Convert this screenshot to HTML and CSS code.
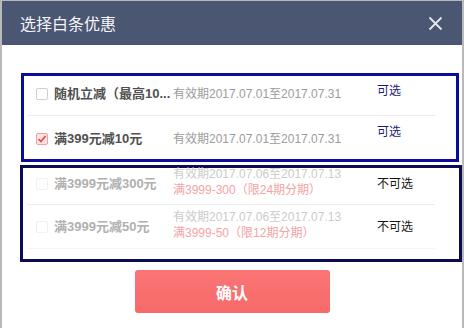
FILE: index.html
```html
<!DOCTYPE html>
<html lang="zh-CN">
<head>
    <meta charset="UTF-8">
    <meta name="viewport" content="width=device-width, initial-scale=1">
    <title>选择白条优惠</title>
    <link rel="stylesheet" href="styles.css">
</head>
<body>

    <div class="dialog">
        <!-- Header -->
        <div class="dialog-head">
            <h2>选择白条优惠</h2>
            <svg class="close" width="15" height="15" viewBox="0 0 15 15">
                <path d="M1.5 1.5 L13.5 13.5 M13.5 1.5 L1.5 13.5" stroke="#e4e7ee" stroke-width="1.8" fill="none"/>
            </svg>
        </div>

        <!-- Available coupons -->
        <div class="group group-ok">
            <div class="coupon row-a">
                <span class="check"></span>
                <span class="name">随机立减（最高10...</span>
                <span class="info">有效期2017.07.01至2017.07.31</span>
                <span class="status up-a">可选</span>
            </div>
            <div class="coupon row-b">
                <span class="check checked">
                    <svg width="10" height="10" viewBox="0 0 10 10"><path d="M1.5 5 L4 7.5 L8.5 2" stroke="#e0474c" stroke-width="1.6" fill="none"/></svg>
                </span>
                <span class="name">满399元减10元</span>
                <span class="info">有效期2017.07.01至2017.07.31</span>
                <span class="status up-b">可选</span>
            </div>
        </div>

        <!-- Unavailable coupons -->
        <div class="group group-off">
            <div class="coupon off row-c">
                <span class="check"></span>
                <span class="name">满3999元减300元</span>
                <span class="info">
                    <span class="line">有效期2017.07.06至2017.07.13</span>
                    <span class="line red">满3999-300（限24期分期）</span>
                </span>
                <span class="status">不可选</span>
            </div>
            <div class="coupon off row-d">
                <span class="check"></span>
                <span class="name">满3999元减50元</span>
                <span class="info">
                    <span class="line">有效期2017.07.06至2017.07.13</span>
                    <span class="line red">满3999-50（限12期分期）</span>
                </span>
                <span class="status">不可选</span>
            </div>
        </div>

        <button class="confirm-btn">确认</button>
    </div>

</body>
</html>
```

FILE: styles.css
```css
/* General */
body {
    margin: 0;
    font-family: "Liberation Sans", "Noto Sans CJK SC", sans-serif;
    background: #fff;
}

.dialog {
    width: 460px;
    height: 327px;
    background: #fff;
    border-left: 2px solid #b9b9b9;
    border-right: 2px solid #b9b9b9;
    border-top: 1px solid #b9b9b9;
    overflow: hidden;
}

/* Header */
.dialog-head {
    height: 44px;
    background: #4b5673;
    display: flex;
    align-items: center;
    justify-content: space-between;
    padding: 0 19px 0 18px;
}

.dialog-head h2 {
    margin: 0;
    color: #f4f5f8;
    font-size: 16px;
    font-weight: normal;
}

.close {
    display: block;
}

/* Coupon groups */
.group {
    border: 3px solid #0b0b9c;
}

.group-ok {
    margin: 28px 3px 0 19px;
}

.group-ok .coupon {
    margin: 0 20px 0 3px;
}

.group-off {
    margin: 3px 0 0 18px;
    padding-bottom: 10px;
    border-color: #0b0b55;
}

.group-off .coupon {
    margin: 0 24px 0 4px;
}

.coupon {
    display: flex;
    align-items: center;
    padding-left: 9px;
    border-bottom: 1px solid #ececec;
    font-size: 12px;
    line-height: 16px;
    box-sizing: border-box;
}

.row-a {
    height: 40px;
    padding-bottom: 4px;
}

.row-b {
    height: 43px;
    padding-top: 3px;
    border-bottom: none;
}

.row-c {
    height: 37px;
    padding-bottom: 5px;
}

.row-d {
    height: 44px;
    border-bottom-color: #f6f6f6;
}

/* Checkbox */
.check {
    width: 10px;
    height: 10px;
    border: 1px solid #cfcfcf;
    border-radius: 2px;
    background: #fff;
    flex: none;
    display: flex;
    align-items: center;
    justify-content: center;
}

.check.checked {
    background: #fbe3e3;
    border-color: #e9a4a4;
}

.off .check {
    border-color: #f0f0f0;
}

.name {
    width: 113px;
    margin-left: 6px;
    margin-right: 6px;
    flex: none;
    font-size: 13px;
    font-weight: bold;
    color: #505050;
    white-space: nowrap;
}

.info {
    width: 204px;
    flex: none;
    color: #9b9b9b;
    white-space: nowrap;
}

.line {
    display: block;
}

.status {
    color: #1c1c72;
    font-size: 12px;
}

.status.up-a {
    margin-bottom: 6px;
}

.status.up-b {
    margin-bottom: 14px;
}

/* Disabled rows */
.off .name {
    color: #b0b0b0;
}

.off .info {
    color: #cbcbcb;
    margin-top: -4px;
}

.off .info .red {
    color: #f3a3a3;
}

.off .status {
    color: #151515;
}

/* Confirm button */
.confirm-btn {
    display: block;
    width: 195px;
    height: 43px;
    margin: 8px auto 0 auto;
    border: none;
    border-radius: 3px;
    background: linear-gradient(#fb7575, #f76a6a);
    color: #fff;
    font-family: "Liberation Sans", "Noto Sans CJK SC", sans-serif;
    font-size: 16px;
    font-weight: bold;
    cursor: pointer;
}
```
